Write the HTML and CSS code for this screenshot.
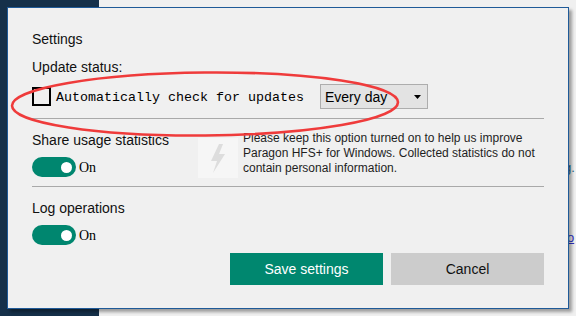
FILE: index.html
```html
<!DOCTYPE html>
<html>
<head>
<meta charset="utf-8">
<link rel="stylesheet" href="styles.css">
</head>
<body>
<div class="desktop">
  <div class="sidebar"></div>
  <div class="main">
    <span class="frag frag-g">g.</span>
    <span class="frag frag-o">o</span>
  </div>
</div>

<div class="dialog">
  <div class="title">Settings</div>
  <div class="label label-update">Update status:</div>
  <div class="check-row">
    <span class="checkbox"></span>
    <span class="check-label">Automatically check for updates</span>
    <div class="select">
      <span class="select-value">Every day</span>
      <svg class="arrow" width="7" height="4" viewBox="0 0 7 4"><polygon points="0,0 7,0 3.5,4" fill="#000"/></svg>
    </div>
  </div>
  <div class="sep sep-1"></div>
  <div class="stats">
    <div class="stats-left">
      <div class="label">Share usage statistics</div>
      <div class="toggle-row">
        <span class="toggle"><span class="knob"></span></span>
        <span class="toggle-text">On</span>
      </div>
    </div>
    <div class="watermark">
      <svg width="40" height="40" viewBox="0 0 40 40"><polygon points="21,6 13,23 19,23 15,35 27,16 21,16 25,6" fill="#dddddd"/></svg>
    </div>
    <p class="desc">Please keep this option turned on to help us improve<br>Paragon HFS+ for Windows. Collected statistics do not<br>contain personal information.</p>
  </div>
  <div class="sep sep-2"></div>
  <div class="label label-log">Log operations</div>
  <div class="toggle-row toggle-row-log">
    <span class="toggle"><span class="knob"></span></span>
    <span class="toggle-text">On</span>
  </div>
  <div class="buttons">
    <button class="btn btn-primary">Save settings</button>
    <button class="btn btn-cancel">Cancel</button>
  </div>
</div>

<svg class="annot" width="576" height="316" viewBox="0 0 576 316">
  <ellipse cx="205" cy="104" rx="193" ry="31.5" fill="none" stroke="#ef3b3b" stroke-width="2.6" transform="rotate(-0.5 205 104)"/>
</svg>
</body>
</html>
```

FILE: styles.css
```css
html, body {
  margin: 0;
  padding: 0;
}
body {
  width: 576px;
  height: 316px;
  overflow: hidden;
  position: relative;
  font-family: "Liberation Sans", Arial, sans-serif;
  background: #f0f0f0;
}
.desktop {
  display: flex;
  height: 316px;
}
.sidebar {
  width: 99px;
  background: #15304a;
}
.main {
  flex: 1;
  background: #f0f0f0;
  position: relative;
}
.frag {
  position: absolute;
  font-size: 13px;
  line-height: 15px;
}
.frag-g {
  left: 465px;
  top: 160px;
  color: #2a6f8f;
}
.frag-o {
  left: 468px;
  top: 230px;
  color: #2f34c8;
  text-decoration: underline;
}

.dialog {
  position: absolute;
  left: 7px;
  top: 7px;
  width: 562px;
  height: 302px;
  box-sizing: border-box;
  border: 1px solid #1f5a98;
  background: #f0f0f0;
  box-shadow: 3px 3px 3px rgba(0, 0, 0, 0.35);
  padding: 21px 24px 0 24px;
  color: #111;
}
.title, .label {
  font-size: 14px;
  line-height: 20px;
  height: 20px;
}
.label-update {
  margin-top: 8px;
}
.check-row {
  margin-top: 7px;
  height: 25px;
  display: flex;
  align-items: center;
}
.checkbox {
  width: 19px;
  height: 19px;
  box-sizing: border-box;
  border: 2px solid #000;
  background: #f0f0f0;
}
.check-label {
  margin-left: 5px;
  font-family: "Liberation Mono", "Courier New", monospace;
  font-size: 13.33px;
  color: #000;
  line-height: 16px;
  padding-top: 2px;
}
.select {
  margin-left: 16px;
  width: 108px;
  height: 25px;
  box-sizing: border-box;
  border: 1px solid #adadad;
  background: #e3e3e3;
  display: flex;
  align-items: center;
  justify-content: space-between;
  padding: 0 6px 0 4px;
}
.select-value {
  font-size: 14px;
  color: #000;
}
.arrow {
  display: block;
}
.sep {
  height: 1px;
  background: #a9a9a9;
}
.sep-1 {
  margin-top: 9px;
}
.stats {
  margin-top: 11px;
  display: flex;
  align-items: flex-start;
}
.stats-left {
  width: 166px;
}
.toggle-row {
  margin-top: 7px;
  height: 20px;
  display: flex;
  align-items: center;
}
.toggle {
  width: 44px;
  height: 20px;
  border-radius: 10px;
  background: #00866f;
  display: flex;
  align-items: center;
  justify-content: flex-end;
  padding-right: 4px;
  box-sizing: border-box;
}
.knob {
  width: 11px;
  height: 11px;
  border-radius: 50%;
  background: #fff;
}
.toggle-text {
  margin-left: 3px;
  font-family: "Liberation Serif", "Times New Roman", serif;
  font-size: 14px;
  color: #000;
  padding-top: 2px;
}
.watermark {
  margin-top: 8px;
  width: 40px;
  height: 40px;
  background: #f6f6f6;
}
.watermark svg {
  display: block;
}
.desc {
  margin: 1px 0 0 5px;
  font-size: 12px;
  line-height: 15px;
  color: #1e1e1e;
}
.sep-2 {
  margin-top: 8px;
}
.label-log {
  margin-top: 11px;
}
.buttons {
  margin-top: 8px;
  display: flex;
  justify-content: flex-end;
  gap: 8px;
}
.btn {
  width: 153px;
  height: 32px;
  border: none;
  margin: 0;
  padding: 0;
  font-family: "Liberation Sans", Arial, sans-serif;
  font-size: 14px;
}
.btn-primary {
  background: #00876f;
  color: #fff;
}
.btn-cancel {
  background: #cccccc;
  color: #111;
}
.annot {
  position: absolute;
  left: 0;
  top: 0;
  pointer-events: none;
}
```
